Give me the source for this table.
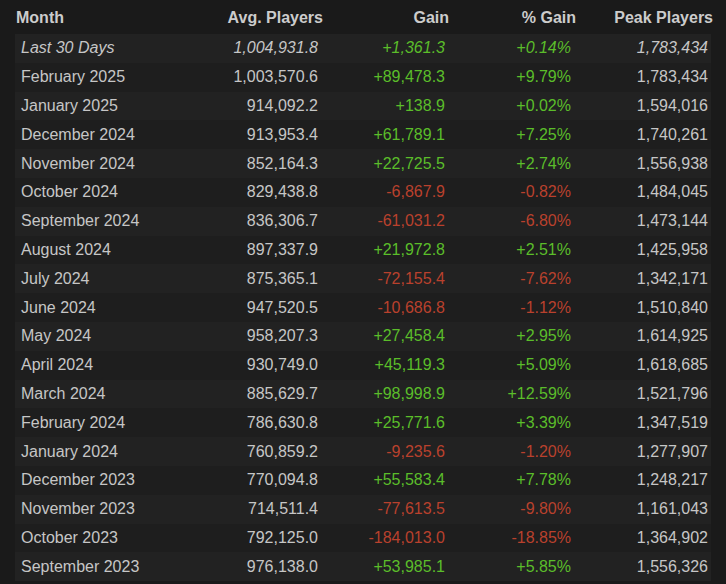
type Row = {
  month: string
  avg: string
  gain: string
  pct: string
  peak: string
}

const ROWS: Row[] = [
  { month: 'Last 30 Days', avg: '1,004,931.8', gain: '+1,361.3', pct: '+0.14%', peak: '1,783,434' },
  { month: 'February 2025', avg: '1,003,570.6', gain: '+89,478.3', pct: '+9.79%', peak: '1,783,434' },
  { month: 'January 2025', avg: '914,092.2', gain: '+138.9', pct: '+0.02%', peak: '1,594,016' },
  { month: 'December 2024', avg: '913,953.4', gain: '+61,789.1', pct: '+7.25%', peak: '1,740,261' },
  { month: 'November 2024', avg: '852,164.3', gain: '+22,725.5', pct: '+2.74%', peak: '1,556,938' },
  { month: 'October 2024', avg: '829,438.8', gain: '-6,867.9', pct: '-0.82%', peak: '1,484,045' },
  { month: 'September 2024', avg: '836,306.7', gain: '-61,031.2', pct: '-6.80%', peak: '1,473,144' },
  { month: 'August 2024', avg: '897,337.9', gain: '+21,972.8', pct: '+2.51%', peak: '1,425,958' },
  { month: 'July 2024', avg: '875,365.1', gain: '-72,155.4', pct: '-7.62%', peak: '1,342,171' },
  { month: 'June 2024', avg: '947,520.5', gain: '-10,686.8', pct: '-1.12%', peak: '1,510,840' },
  { month: 'May 2024', avg: '958,207.3', gain: '+27,458.4', pct: '+2.95%', peak: '1,614,925' },
  { month: 'April 2024', avg: '930,749.0', gain: '+45,119.3', pct: '+5.09%', peak: '1,618,685' },
  { month: 'March 2024', avg: '885,629.7', gain: '+98,998.9', pct: '+12.59%', peak: '1,521,796' },
  { month: 'February 2024', avg: '786,630.8', gain: '+25,771.6', pct: '+3.39%', peak: '1,347,519' },
  { month: 'January 2024', avg: '760,859.2', gain: '-9,235.6', pct: '-1.20%', peak: '1,277,907' },
  { month: 'December 2023', avg: '770,094.8', gain: '+55,583.4', pct: '+7.78%', peak: '1,248,217' },
  { month: 'November 2023', avg: '714,511.4', gain: '-77,613.5', pct: '-9.80%', peak: '1,161,043' },
  { month: 'October 2023', avg: '792,125.0', gain: '-184,013.0', pct: '-18.85%', peak: '1,364,902' },
  { month: 'September 2023', avg: '976,138.0', gain: '+53,985.1', pct: '+5.85%', peak: '1,556,326' },
]

const cols = 'grid grid-cols-[175px_133px_126px_127px_137px_4px]'

export default function App() {
  return (
    <div className="min-h-screen bg-[#1a1a1a] px-[15px] font-['Liberation_Sans',Arial,sans-serif] text-[16px] text-[#c6c6c6]">
      <div className={`${cols} h-[34px] items-center pt-px font-bold text-[#cccccc]`}>
        <div className="pl-px">Month</div>
        <div className="text-right">Avg. Players</div>
        <div className="text-right">Gain</div>
        <div className="text-right">% Gain</div>
        <div className="text-right">Peak Players</div>
        <div />
      </div>
      {ROWS.map((r, i) => {
        const up = r.gain.startsWith('+')
        const tone = up ? 'text-[#5bbd2a]' : 'text-[#b9412d]'
        return (
          <div
            key={r.month}
            className={`${cols} h-[28.8px] items-center ${i % 2 === 0 ? 'bg-[#222222]' : 'bg-[#1e1e1e]'} ${i === 0 ? 'italic' : ''}`}
          >
            <div className="pl-[6px]">{r.month}</div>
            <div className="pr-[5px] text-right">{r.avg}</div>
            <div className={`pr-[4px] text-right ${tone}`}>{r.gain}</div>
            <div className={`pr-[5px] text-right ${tone}`}>{r.pct}</div>
            <div className="pr-[5px] text-right">{r.peak}</div>
            <div />
          </div>
        )
      })}
    </div>
  )
}
